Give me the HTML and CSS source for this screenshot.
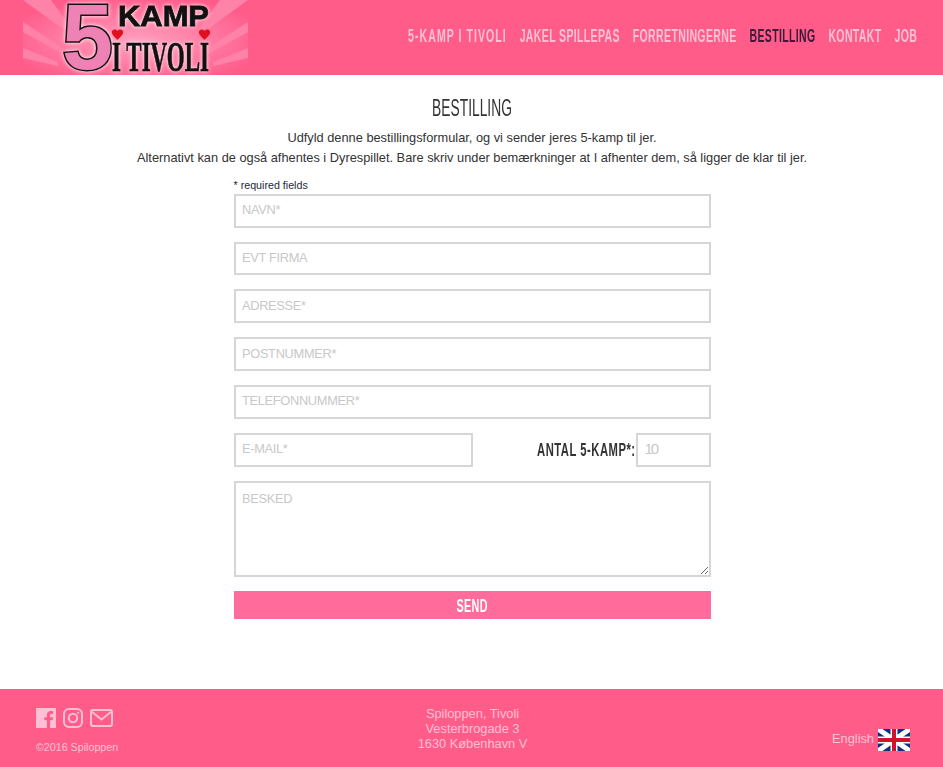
FILE: index.html
```html
<!DOCTYPE html>
<html lang="en">
<head>
    <meta charset="UTF-8">
    <meta name="viewport" content="width=device-width, initial-scale=1.0">
    <title>Bestilling</title>
    <link rel="stylesheet" href="styles.css">
</head>
<body>
    <header class="topbar">
        <a class="logo" href="#">
            <svg class="logo-art" width="225" height="75" viewBox="0 0 225 75">
                <defs>
                    <radialGradient id="logoBg" cx="50%" cy="55%" r="60%">
                        <stop offset="0" stop-color="#ffa0bf"/>
                        <stop offset="1" stop-color="#ff5c8a"/>
                    </radialGradient>
                </defs>
                <rect width="225" height="75" fill="url(#logoBg)"/>
                <path d="M0 22 L40 48 L40 54 L0 32Z M0 48 L35 62 L35 66 L0 58Z M225 22 L185 48 L185 54 L225 32Z M225 48 L190 62 L190 66 L225 58Z M0 0 L28 0 L50 30 L44 32Z M225 0 L197 0 L175 30 L181 32Z" fill="#ff82a8"/>
                <text class="logo-five" x="39" y="69" textLength="51" lengthAdjust="spacingAndGlyphs">5</text>
                <text class="logo-kamp" x="95" y="26" textLength="91" lengthAdjust="spacingAndGlyphs">KAMP</text>
                <text class="logo-tivoli" x="89" y="71" textLength="97" lengthAdjust="spacingAndGlyphs">I TIVOLI</text>
                <path class="heart" d="M94.500 31 C92 28 88 30 89 33.500 C90 36 93 38 94.500 40 C96 38 99 36 100 33.500 C101 30 97 28 94.500 31Z"/>
                <path class="heart" d="M181.500 31 C179 28 175 30 176 33.500 C177 36 180 38 181.500 40 C183 38 186 36 187 33.500 C188 30 184 28 181.500 31Z"/>
            </svg>
        </a>
        <nav class="menu">
            <a href="#">5-KAMP I TIVOLI</a>
            <a href="#">JAKEL SPILLEPAS</a>
            <a href="#">FORRETNINGERNE</a>
            <a href="#" class="active">BESTILLING</a>
            <a href="#">KONTAKT</a>
            <a href="#">JOB</a>
        </nav>
    </header>

    <main class="content">
        <h1>BESTILLING</h1>
        <p class="intro">Udfyld denne bestillingsformular, og vi sender jeres 5-kamp til jer.<br>Alternativt kan de også afhentes i Dyrespillet. Bare skriv under bemærkninger at I afhenter dem, så ligger de klar til jer.</p>

        <form class="order-form">
            <div class="required">* required fields</div>
            <input type="text" placeholder="NAVN*">
            <input type="text" placeholder="EVT FIRMA">
            <input type="text" placeholder="ADRESSE*">
            <input type="text" placeholder="POSTNUMMER*">
            <input type="text" placeholder="TELEFONNUMMER*">
            <div class="form-row">
                <input type="text" class="email" placeholder="E-MAIL*">
                <label class="amount-label" for="amount">ANTAL 5-KAMP*:</label>
                <input type="text" id="amount" class="amount" placeholder="10">
            </div>
            <textarea placeholder="BESKED"></textarea>
            <button type="button"><span>SEND</span></button>
        </form>
    </main>

    <footer class="footer">
        <div class="footer-left">
            <div class="social">
                <svg width="20" height="20" viewBox="0 0 20 20"><path fill="#ffc0d4" d="M0 0H20V20H14V12.3H16.6L17 9.3H14V7.4C14 6.5 14.3 5.9 15.5 5.9H17.1V3.2C16.8 3.2 15.900 3.100 14.800 3.100C12.500 3.100 10.900 4.500 10.900 7.100V9.300H8.300V12.300H10.900V20H0Z"/></svg>
                <svg width="20" height="20" viewBox="0 0 20 20" fill="none" stroke="#ffc0d4" stroke-width="2"><rect x="1" y="1" width="18" height="18" rx="5"/><circle cx="10" cy="10" r="4.2"/><circle cx="15.200" cy="4.800" r="1.100" fill="#ffc0d4" stroke="none"/></svg>
                <svg width="23" height="18" viewBox="0 0 23 18" fill="none" stroke="#ffc0d4" stroke-width="2"><rect x="1" y="1" width="21" height="16" rx="2"/><path d="M1.500 2.500 L11.500 10.500 L21.500 2.500"/></svg>
            </div>
            <div class="copyright">©2016 Spiloppen</div>
        </div>
        <address class="footer-address">Spiloppen, Tivoli<br>Vesterbrogade 3<br>1630 København V</address>
        <a class="lang" href="#">
            <span>English</span>
            <svg width="32" height="22" viewBox="0 0 32 22">
                <rect width="32" height="22" fill="#0f2f7f"/>
                <path d="M0 0L32 22M32 0L0 22" stroke="#fff" stroke-width="5"/>
                <path d="M16 0V22M0 11H32" stroke="#fff" stroke-width="7"/>
                <path d="M16 0V22M0 11H32" stroke="#cf142b" stroke-width="4"/>
            </svg>
        </a>
    </footer>
</body>
</html>
```

FILE: styles.css
```css
body {
    margin: 0;
    font-family: "Liberation Sans", Arial, sans-serif;
    font-size: 12.8px;
    color: #333;
    background-color: #fff;
}

.topbar {
    display: flex;
    justify-content: space-between;
    align-items: center;
    height: 75px;
    padding: 0 26px 0 23px;
    background-color: #ff5c8a;
}

.logo {
    display: block;
    flex: none;
    height: 75px;
}

.logo-art {
    overflow: visible;
}

.logo-five {
    font-family: "Liberation Sans", sans-serif;
    font-size: 92px;
    font-weight: bold;
    fill: #ee82b4;
    stroke: #111;
    stroke-width: 3px;
    paint-order: stroke;
    filter: drop-shadow(0 0 2px #fff);
}

.logo-kamp {
    font-family: "Liberation Sans", sans-serif;
    font-size: 30px;
    font-weight: bold;
    fill: #111;
    stroke: #111;
    stroke-width: 0.8px;
    filter: drop-shadow(0 0 2px #fff);
}

.logo-tivoli {
    font-family: "Liberation Serif", serif;
    font-size: 43px;
    font-weight: bold;
    fill: #111;
    stroke: #111;
    stroke-width: 0.6px;
    filter: drop-shadow(0 0 2px #fff);
}

.heart {
    fill: #e0101f;
}

/* no condensed font available, so the wide one is squeezed */
.menu {
    flex: none;
    display: flex;
    gap: 22px;
    margin-left: -400px;
    margin-top: -3px;
    transform: scaleX(0.585);
    transform-origin: right center;
    white-space: nowrap;
}

.menu a {
    font-size: 18px;
    font-weight: bold;
    letter-spacing: 0.6px;
    color: #ffc0d4;
    text-decoration: none;
}

.menu a:first-child {
    letter-spacing: 1.8px;
}

.menu a.active {
    color: #3a1c3a;
}

.content {
    height: 614px;
    box-sizing: border-box;
    padding: 20px 0 0 1px;
    text-align: center;
}

h1 {
    margin: 0 0 7px;
    font-size: 23px;
    line-height: 26px;
    font-weight: normal;
    color: #333;
    transform: scaleX(0.6);
}

.intro {
    margin: 0 0 10.8px;
    line-height: 20px;
}

.order-form {
    width: 477px;
    margin: 0 auto;
    text-align: left;
}

.required {
    font-size: 10.7px;
    line-height: 13px;
    margin-bottom: 2px;
    color: #1a2b3a;
}

input,
textarea {
    display: block;
    box-sizing: border-box;
    width: 100%;
    height: 33.8px;
    margin-bottom: 14px;
    padding: 0 6.5px 2px;
    border: 2px solid #d6d6d6;
    border-radius: 0;
    outline: none;
    font-family: "Liberation Sans", Arial, sans-serif;
    font-size: 12.8px;
    letter-spacing: -0.3px;
    color: #333;
}

input::placeholder,
textarea::placeholder {
    color: #c8c8c8;
    opacity: 1;
}

textarea {
    height: 96px;
    padding-top: 8px;
}

.form-row {
    display: flex;
    align-items: center;
    margin-bottom: 14px;
}

.form-row input {
    margin-bottom: 0;
}

.email {
    width: 239px;
    margin-right: auto;
}

.amount-label {
    flex: none;
    padding-top: 2px;
    font-size: 18px;
    font-weight: bold;
    letter-spacing: 0.8px;
    color: #333;
    transform: scaleX(0.625);
    transform-origin: right center;
}

input.amount {
    width: 75px;
    padding-left: 7px;
    font-size: 15px;
    letter-spacing: -2px;
}

button {
    display: block;
    width: 100%;
    height: 28px;
    padding: 4px 0 0;
    border: none;
    background-color: #ff6b9a;
    color: #fff;
    font-family: "Liberation Sans", Arial, sans-serif;
    font-size: 18px;
    font-weight: bold;
    letter-spacing: 0.6px;
    cursor: pointer;
}

button span {
    display: inline-block;
    transform: scaleX(0.6);
}

.footer {
    position: relative;
    height: 78px;
    background-color: #ff5c8a;
    color: #ffc0d4;
}

.footer-left {
    position: absolute;
    left: 36px;
    top: 19px;
}

.social {
    display: flex;
    align-items: center;
    gap: 7px;
    height: 20px;
}

.copyright {
    margin-top: 13px;
    font-size: 10.7px;
}

.footer-address {
    padding: 17px 0 0 2px;
    font-style: normal;
    line-height: 15px;
    text-align: center;
}

.lang {
    position: absolute;
    right: 33px;
    top: 40px;
    display: flex;
    align-items: center;
    gap: 4px;
    color: #ffc0d4;
    text-decoration: none;
}

.lang span {
    margin-bottom: 3px;
}
```
